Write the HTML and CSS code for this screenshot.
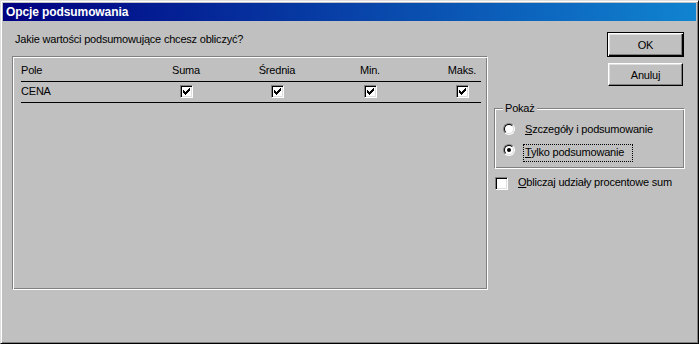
FILE: index.html
```html
<!DOCTYPE html>
<html lang="pl">
<head>
<meta charset="utf-8">
<title>Opcje podsumowania</title>
<link rel="stylesheet" href="styles.css">
</head>
<body>
<div class="window">
  <div class="titlebar"><span class="title">Opcje podsumowania</span></div>
  <div class="content">
    <div class="left">
      <div class="prompt">Jakie wartości podsumowujące chcesz obliczyć?</div>
      <div class="frame">
        <div class="grid head">
          <div class="cell name">Pole</div>
          <div class="cell">Suma</div>
          <div class="cell">Średnia</div>
          <div class="cell">Min.</div>
          <div class="cell last">Maks.</div>
        </div>
        <div class="grid row">
          <div class="cell name">CENA</div>
          <div class="cell"><span class="check"><svg class="tick" width="7" height="7" viewBox="0 0 7 7"><path d="M6 0h1v1h-1zM5 1h2v1h-2zM0 2h1v1h-1zM4 2h3v1h-3zM0 3h2v1h-2zM3 3h3v1h-3zM0 4h5v1h-5zM1 5h3v1h-3zM2 6h1v1h-1z"/></svg></span></div>
          <div class="cell"><span class="check"><svg class="tick" width="7" height="7" viewBox="0 0 7 7"><path d="M6 0h1v1h-1zM5 1h2v1h-2zM0 2h1v1h-1zM4 2h3v1h-3zM0 3h2v1h-2zM3 3h3v1h-3zM0 4h5v1h-5zM1 5h3v1h-3zM2 6h1v1h-1z"/></svg></span></div>
          <div class="cell"><span class="check"><svg class="tick" width="7" height="7" viewBox="0 0 7 7"><path d="M6 0h1v1h-1zM5 1h2v1h-2zM0 2h1v1h-1zM4 2h3v1h-3zM0 3h2v1h-2zM3 3h3v1h-3zM0 4h5v1h-5zM1 5h3v1h-3zM2 6h1v1h-1z"/></svg></span></div>
          <div class="cell last"><span class="check"><svg class="tick" width="7" height="7" viewBox="0 0 7 7"><path d="M6 0h1v1h-1zM5 1h2v1h-2zM0 2h1v1h-1zM4 2h3v1h-3zM0 3h2v1h-2zM3 3h3v1h-3zM0 4h5v1h-5zM1 5h3v1h-3zM2 6h1v1h-1z"/></svg></span></div>
        </div>
      </div>
    </div>
    <div class="right">
      <button class="btn default">OK</button>
      <button class="btn cancel">Anuluj</button>
      <div class="group">
        <span class="group-label">Pokaż</span>
        <div class="radio-row first"><span class="radio"><span class="radio-in"></span></span><span class="rlabel"><u>S</u>zczegóły i podsumowanie</span></div>
        <div class="radio-row"><span class="radio"><span class="radio-in on"></span></span><span class="rlabel focus"><u>T</u>ylko podsumowanie</span></div>
      </div>
      <div class="check-row"><span class="check"></span><span class="clabel"><u>O</u>bliczaj udziały procentowe sum</span></div>
    </div>
  </div>
</div>
</body>
</html>
```
FILE: styles.css
```css
* { box-sizing: border-box; }
html, body { margin: 0; padding: 0; }
body {
  width: 699px;
  height: 344px;
  overflow: hidden;
  background: #c0c0c0;
  font-family: "Liberation Sans", Arial, sans-serif;
  font-size: 11px;
  letter-spacing: -0.2px;
  color: #000;
}
u { text-decoration: underline; text-underline-offset: 1px; }

.window {
  width: 699px;
  height: 344px;
  background: #c0c0c0;
  border: 1px solid;
  border-color: #dfdfdf #000 #000 #dfdfdf;
  box-shadow: inset 1px 1px #fff, inset -1px -1px #808080;
  padding: 2px;
  display: flex;
  flex-direction: column;
}

.titlebar {
  height: 18px;
  flex: none;
  background: linear-gradient(to right, #000080, #1084d0);
  color: #fff;
  display: flex;
  align-items: center;
  padding-left: 3px;
}
.title { font-weight: bold; font-size: 12px; line-height: 14px; letter-spacing: -0.1px; }

.content {
  flex: 1;
  display: flex;
  padding-left: 9px;
}

.left {
  width: 476px;
  flex: none;
  padding-top: 12px;
}
.prompt { line-height: 13px; padding-left: 3px; }

.frame {
  margin-top: 10px;
  height: 234px;
  border: 1px solid;
  border-color: #808080 #fff #fff #808080;
  box-shadow: inset 1px 1px #fff, inset -1px -1px #808080;
  padding: 7px 6px 0 8px;
}

.grid {
  display: grid;
  grid-template-columns: 120px 90px 92px 94px 64px;
  border-bottom: 1px solid #000;
}
.head { line-height: 13px; padding-bottom: 4px; }
.row { line-height: 13px; padding: 3px 0 4px; align-items: center; }
.cell { display: flex; justify-content: center; white-space: nowrap; }
.cell.name { justify-content: flex-start; }
.cell.last { padding-left: 26px; }

.check {
  width: 13px;
  height: 13px;
  flex: none;
  background: #fff;
  border: 1px solid;
  border-color: #808080 #fff #fff #808080;
  box-shadow: inset 1px 1px #000, inset -1px -1px #dfdfdf;
  display: flex;
  align-items: center;
  justify-content: center;
}
.tick { display: block; shape-rendering: crispEdges; fill: #000; }

.right {
  width: 191px;
  flex: none;
  margin-left: 6px;
  padding-top: 11px;
  display: flex;
  flex-direction: column;
  align-items: flex-end;
}

.btn {
  width: 75px;
  height: 23px;
  padding: 0;
  margin: 0 2px 0 0;
  font-family: "Liberation Sans", Arial, sans-serif;
  font-size: 11px;
  letter-spacing: -0.2px;
  color: #000;
  background: #c0c0c0;
  border: 1px solid;
  border-color: #fff #000 #000 #fff;
  box-shadow: inset -1px -1px #808080, inset 1px 1px #dfdfdf;
}
.btn.default {
  width: 77px;
  height: 25px;
  margin-right: 1px;
  border-color: #000;
  box-shadow: inset 1px 1px #fff, inset -1px -1px #000, inset -2px -2px #808080, inset 2px 2px #dfdfdf;
}
.btn.cancel { margin-top: 6px; }

.group {
  position: relative;
  align-self: stretch;
  margin-top: 22px;
  height: 61px;
  border: 1px solid;
  border-color: #808080 #fff #fff #808080;
  box-shadow: inset 1px 1px #fff, inset -1px -1px #808080;
  padding: 14px 0 0 8px;
}
.group-label {
  position: absolute;
  top: -7px;
  left: 8px;
  padding: 0 2px;
  line-height: 13px;
  background: #c0c0c0;
}

.radio-row { display: flex; align-items: flex-start; }
.radio-row.first { height: 21px; }
.radio {
  width: 12px;
  height: 12px;
  flex: none;
  border-radius: 50%;
  border: 1px solid;
  border-color: #808080 #fff #fff #808080;
}
.radio-in {
  display: flex;
  align-items: center;
  justify-content: center;
  width: 10px;
  height: 10px;
  border-radius: 50%;
  border: 1px solid;
  border-color: #000 #dfdfdf #dfdfdf #000;
  background: #fff;
}
.radio-in.on::after {
  content: "";
  width: 4px;
  height: 4px;
  border-radius: 50%;
  background: #000;
}
.rlabel { margin-left: 10px; line-height: 13px; white-space: nowrap; }
.rlabel.focus {
  margin-left: 8px;
  border: 1px dotted #000;
  padding: 1px 8px 2px 1px;
}

.check-row {
  align-self: stretch;
  display: flex;
  align-items: flex-start;
  margin-top: 8px;
  padding-left: 1px;
}
.clabel { margin-left: 10px; line-height: 13px; margin-top: -1px; white-space: nowrap; }
```
